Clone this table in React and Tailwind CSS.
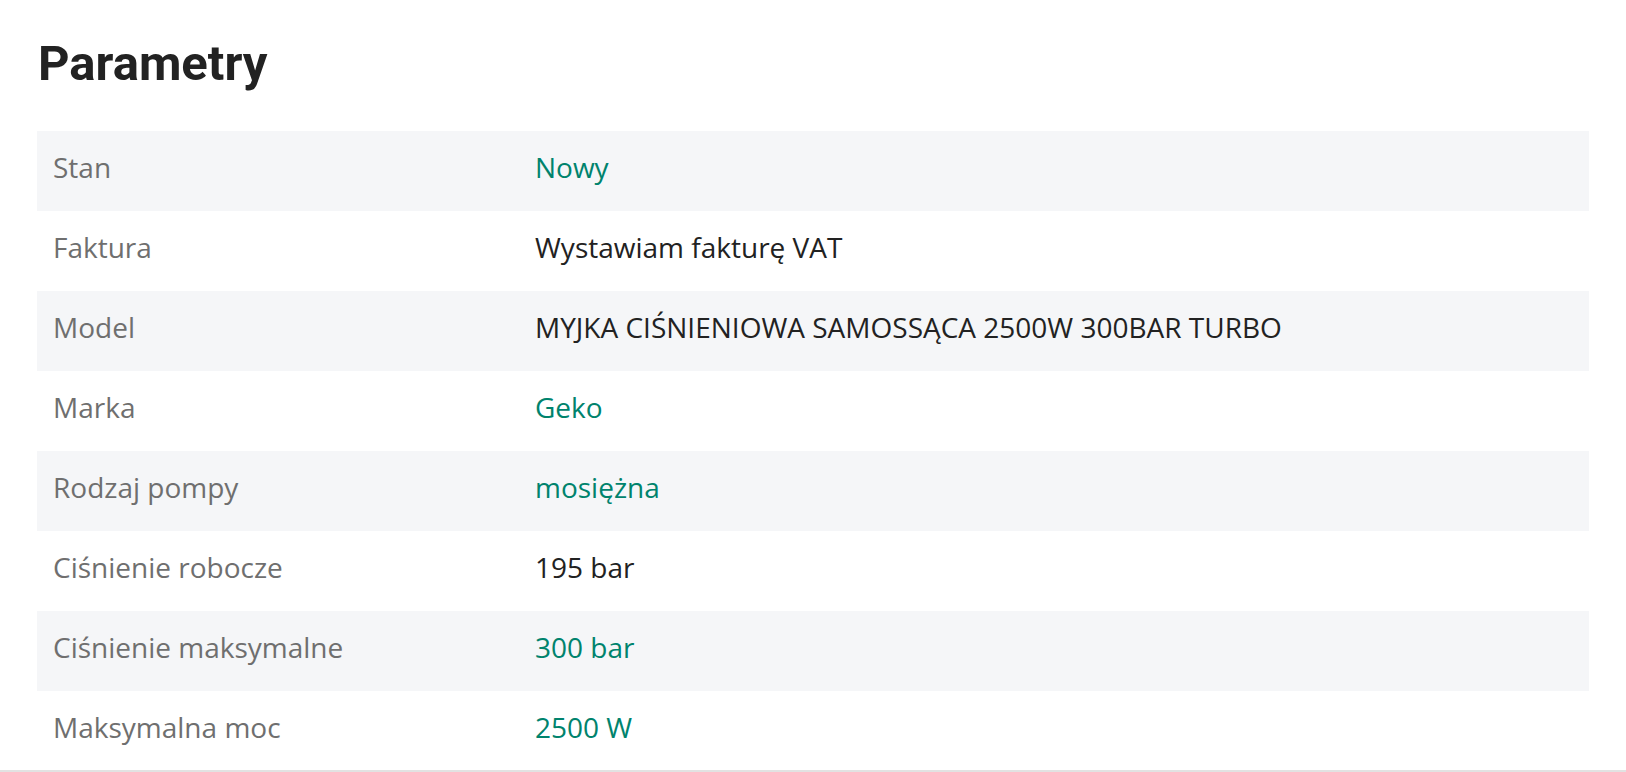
const rows = [
  { label: 'Stan', value: 'Nowy', link: true },
  { label: 'Faktura', value: 'Wystawiam fakturę VAT' },
  { label: 'Model', value: 'MYJKA CIŚNIENIOWA SAMOSSĄCA 2500W 300BAR TURBO' },
  { label: 'Marka', value: 'Geko', link: true },
  { label: 'Rodzaj pompy', value: 'mosiężna', link: true },
  { label: 'Ciśnienie robocze', value: '195 bar' },
  { label: 'Ciśnienie maksymalne', value: '300 bar', link: true },
  { label: 'Maksymalna moc', value: '2500 W', link: true },
];

const ParamRow = ({ label, value, link, shaded }) => (
  <div className={`grid grid-cols-[482px_1fr] h-[80px] items-center ${shaded ? 'bg-[#f5f6f8]' : 'bg-white'}`}>
    <div className="px-4 pb-2 text-[#6f6f6f]">{label}</div>
    <div className={`px-4 pb-2 ${link ? 'text-[#00836d]' : 'text-[#222222]'}`}>{value}</div>
  </div>
);

const App = () => {
  return (
    <div className="h-[772px] bg-white border-b-2 border-[#e2e2e2] overflow-hidden">
      <div className="pl-[37px] pr-[37px] pt-[34px]">
        <h2 className="font-['Roboto',sans-serif] font-bold text-[49px] leading-[60px] text-[#222222] pl-px">
          Parametry
        </h2>
        <div className="mt-[37px] font-['Open_Sans',sans-serif] text-[28px] leading-[36px]">
          {rows.map((row, i) => (
            <ParamRow key={row.label} {...row} shaded={i % 2 === 0} />
          ))}
        </div>
      </div>
    </div>
  );
};

export default App;
